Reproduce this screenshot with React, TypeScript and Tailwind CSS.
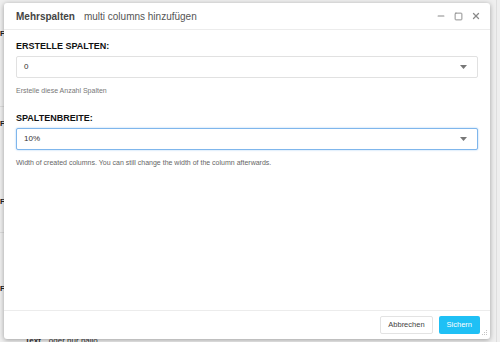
import { Minus, Square, X } from 'lucide-react';

function Caret() {
  return (
    <svg width="7" height="4" viewBox="0 0 7 4" className="text-[#777]">
      <path d="M0 0 L7 0 L3.5 4 Z" fill="currentColor" />
    </svg>
  );
}

function SelectBox({ value, focused }: { value: string; focused?: boolean }) {
  return (
    <div
      className={`flex h-[22px] items-center justify-between rounded-[2px] bg-white pl-[7px] pr-[10px] text-[8px] text-[#333] ${
        focused ? 'border border-[#7fb6ec] shadow-[0_0_2px_#9cc8f2]' : 'border border-[#e1e1e1]'
      }`}
    >
      <span>{value}</span>
      <Caret />
    </div>
  );
}

export default function App() {
  const rows = [28, 118, 196, 283];
  return (
    <div
      className="relative h-[342px] w-[500px] overflow-hidden bg-[#efefef]"
      style={{ fontFamily: '"Liberation Sans", Arial, sans-serif' }}
    >
      {/* page behind the dialog */}
      {rows.map(y => (
        <div key={y} className="absolute left-0 text-[8px] font-bold text-[#222]" style={{ top: y }}>
          F
        </div>
      ))}
      <div className="absolute left-0 top-[106px] h-px w-[6px] bg-[#dcdcdc]" />
      <div className="absolute left-0 top-[232px] h-px w-[6px] bg-[#dcdcdc]" />
      <div className="absolute right-[3px] top-0 h-full w-px bg-[#dedede]" />
      <div className="absolute left-[25px] top-[336px] text-[8px] leading-[10px] text-[#333]">
        <span className="font-bold">Text</span>
        <span className="ml-[8px]">oder nur hallo</span>
      </div>

      {/* dialog */}
      <div className="absolute left-[4px] top-[3px] flex h-[336px] w-[486px] flex-col rounded-[3px] bg-white shadow-[0_1px_5px_rgba(0,0,0,0.35)]">
        <div className="flex h-[27px] shrink-0 items-center justify-between border-b border-[#ececec] pl-[12px] pr-[9px]">
          <div className="flex items-baseline gap-[9px]">
            <span className="text-[10px] font-bold text-[#444]">Mehrspalten</span>
            <span className="text-[10px] text-[#555]">multi columns hinzufügen</span>
          </div>
          <div className="flex items-center gap-[8px] text-[#8a8a8a]">
            <Minus size={10} strokeWidth={2.5} />
            <Square size={9} strokeWidth={2.5} />
            <X size={10} strokeWidth={3} />
          </div>
        </div>

        <div className="flex-1 px-[12px] pt-[11px]">
          <div className="mb-[4px] text-[9px] font-bold leading-[11px] text-[#111]">ERSTELLE SPALTEN:</div>
          <SelectBox value="0" />
          <div className="mt-[8px] text-[7px] leading-[9px] text-[#777]">Erstelle diese Anzahl Spalten</div>

          <div className="mb-[4px] mt-[18px] text-[9px] font-bold leading-[11px] text-[#111]">SPALTENBREITE:</div>
          <SelectBox value="10%" focused />
          <div className="mt-[8px] text-[7px] leading-[9px] text-[#666]">
            Width of created columns. You can still change the width of the column afterwards.
          </div>
        </div>

        <div className="relative flex h-[29px] shrink-0 items-center justify-end gap-[6px] border-t border-[#ececec] pr-[10px]">
          <button className="h-[18px] rounded-[2px] border border-[#e3e3e3] bg-white px-[7px] text-[7.5px] text-[#444]">
            Abbrechen
          </button>
          <button className="h-[18px] rounded-[2px] bg-[#1fc0f5] px-[8px] text-[7.5px] text-white">
            Sichern
          </button>
          {/* resize grip */}
          <svg width="7" height="7" viewBox="0 0 7 7" className="absolute bottom-[2px] right-[2px] text-[#c4c4c4]">
            <rect x="5" y="0" width="1" height="1" fill="currentColor" />
            <rect x="3" y="2" width="1" height="1" fill="currentColor" />
            <rect x="5" y="2" width="1" height="1" fill="currentColor" />
            <rect x="1" y="4" width="1" height="1" fill="currentColor" />
            <rect x="3" y="4" width="1" height="1" fill="currentColor" />
            <rect x="5" y="4" width="1" height="1" fill="currentColor" />
          </svg>
        </div>
      </div>
    </div>
  );
}
